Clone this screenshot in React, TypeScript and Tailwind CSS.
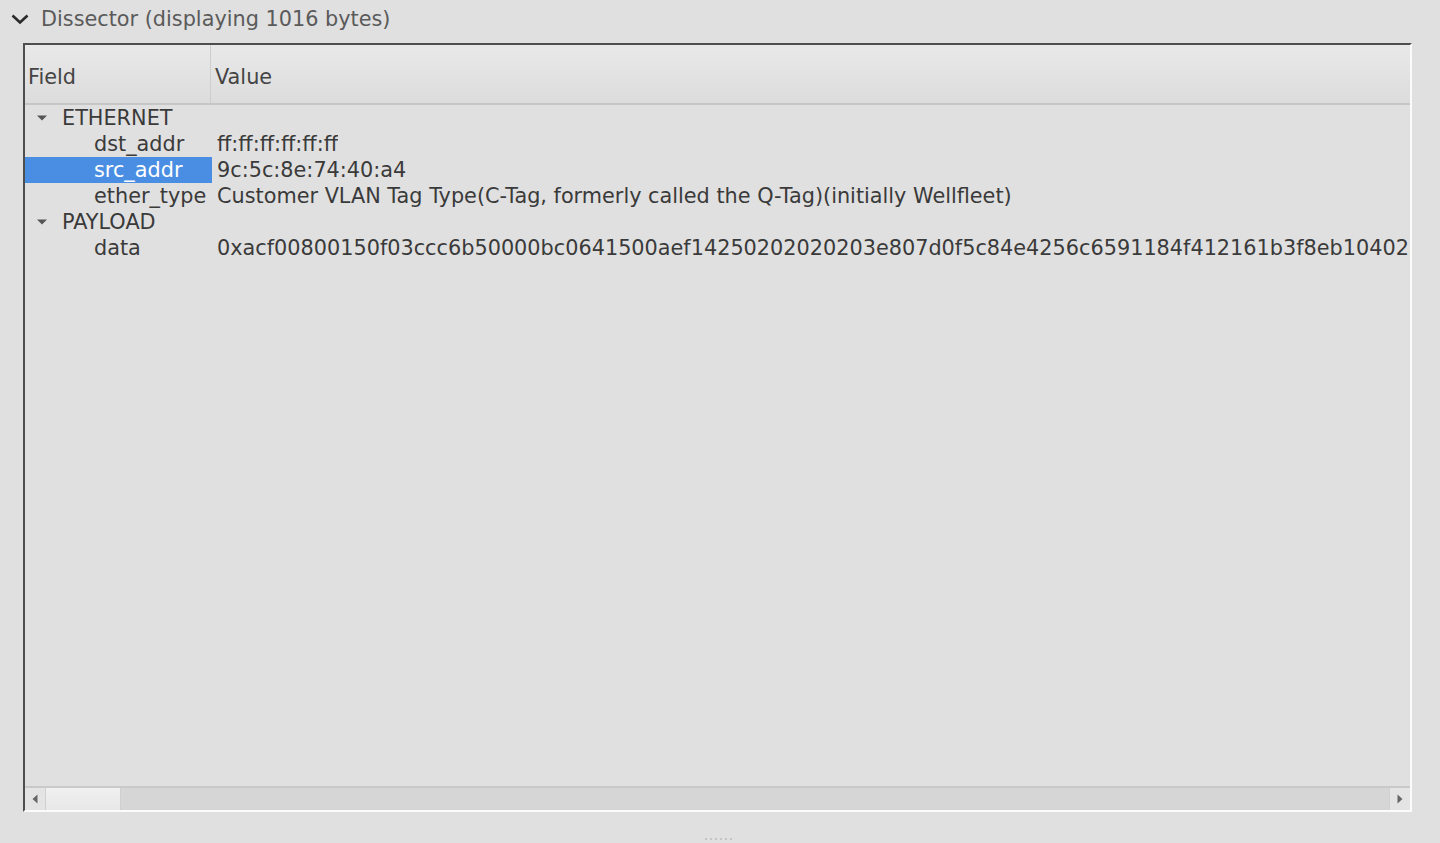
import React from "react";

const Tri = () => (
  <svg width="12" height="8" viewBox="0 0 12 8" className="shrink-0">
    <path d="M1 1.5 L11 1.5 L6 6.5 Z" fill="#555" />
  </svg>
);

type Row = { field: string; value?: string; level: 0 | 1; selected?: boolean };

const rows: Row[] = [
  { field: "ETHERNET", level: 0 },
  { field: "dst_addr", value: "ff:ff:ff:ff:ff:ff", level: 1 },
  { field: "src_addr", value: "9c:5c:8e:74:40:a4", level: 1, selected: true },
  {
    field: "ether_type",
    value: "Customer VLAN Tag Type(C-Tag, formerly called the Q-Tag)(initially Wellfleet)",
    level: 1,
  },
  { field: "PAYLOAD", level: 0 },
  {
    field: "data",
    value:
      "0xacf00800150f03ccc6b50000bc0641500aef14250202020203e807d0f5c84e4256c6591184f412161b3f8eb10402a8c0e1f3",
    level: 1,
  },
];

export default function App() {
  return (
    <div
      className="w-[1440px] h-[843px] bg-[#e0e0e0] flex flex-col overflow-hidden text-[20.8px] text-[#3a3a3a]"
      style={{ fontFamily: '"DejaVu Sans", "Liberation Sans", sans-serif' }}
    >
      <div className="h-[43px] flex items-start pt-[6px] pl-[10px] gap-[11px]">
        <svg width="20" height="20" viewBox="0 0 20 20" className="mt-[3px]">
          <path d="M2.5 6.5 L10 13.5 L17.5 6.5" stroke="#2a2a2a" strokeWidth="2.6" fill="none" />
        </svg>
        <span className="text-[#5a5a5a] leading-[26px]">Dissector (displaying 1016 bytes)</span>
      </div>
      <div className="ml-[23px] w-[1389px] h-[769px] border-l-2 border-t-2 border-[#4e4e4e] border-r-2 border-b-2 border-r-[#fbfbfb] border-b-[#fbfbfb] flex flex-col">
        <div className="h-[60px] flex bg-gradient-to-b from-[#e9e9e9] to-[#dcdcdc] border-b-2 border-[#c6c6c6] text-[#444]">
          <div className="w-[186px] border-r border-[#cdcdcd] flex items-center pl-[3px] pt-[8px]">Field</div>
          <div className="flex-1 flex items-center pl-[4px] pt-[8px]">Value</div>
        </div>
        <div className="flex-1 flex flex-col overflow-hidden">
          {rows.map((r, i) => (
            <div key={i} className="h-[26px] flex items-center whitespace-nowrap leading-[26px]">
              <div
                className={
                  "w-[187px] h-full flex items-center shrink-0 " +
                  (r.selected ? "bg-[#4a8ee3] text-white" : "")
                }
              >
                {r.level === 0 ? (
                  <div className="flex items-center">
                    <div className="w-[37px] flex justify-end pr-[14px]">
                      <Tri />
                    </div>
                    <span>{r.field}</span>
                  </div>
                ) : (
                  <span className="pl-[69px]">{r.field}</span>
                )}
              </div>
              {r.value && <div className="pl-[5px] overflow-hidden">{r.value}</div>}
            </div>
          ))}
        </div>
        <div className="h-[24px] border-t-2 border-[#c9c9c9] bg-[#d6d6d6] flex">
          <div className="w-[21px] bg-[#e4e4e4] flex items-center justify-center border-r border-[#d0d0d0]">
            <svg width="6" height="10" viewBox="0 0 6 10">
              <path d="M5.5 0.5 L0.5 5 L5.5 9.5 Z" fill="#666" />
            </svg>
          </div>
          <div className="w-[75px] bg-gradient-to-b from-[#f0f0f0] to-[#e8e8e8] border-r border-[#cfcfcf]" />
          <div className="flex-1" />
          <div className="w-[21px] bg-[#e4e4e4] flex items-center justify-center border-l border-[#d0d0d0]">
            <svg width="6" height="10" viewBox="0 0 6 10">
              <path d="M0.5 0.5 L5.5 5 L0.5 9.5 Z" fill="#666" />
            </svg>
          </div>
        </div>
      </div>
      <div className="flex-1 flex items-end justify-center pb-[3px]">
        <div className="flex gap-[3px] ml-[-4px]">
          {[0, 1, 2, 3, 4, 5].map((k) => (
            <div key={k} className="w-[2px] h-[2px] bg-[#c4c4c4]" />
          ))}
        </div>
      </div>
    </div>
  );
}
